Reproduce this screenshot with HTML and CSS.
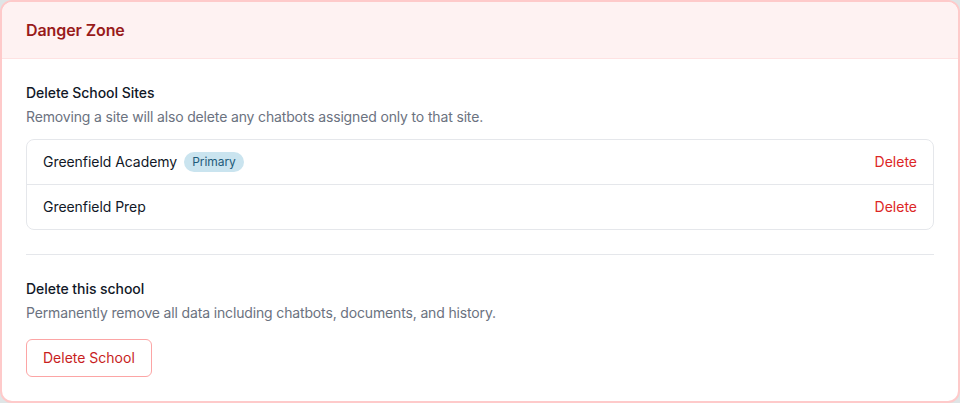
FILE: index.html
```html
<!DOCTYPE html>
<html lang="en">
<head>
  <meta charset="UTF-8">
  <meta name="viewport" content="width=device-width, initial-scale=1">
  <title>Danger Zone</title>
  <link rel="stylesheet" href="styles.css">
</head>
<body>
  <div class="card">
    <div class="card-header">
      <h2>Danger Zone</h2>
    </div>
    <div class="card-body">
      <div class="section">
        <h3>Delete School Sites</h3>
        <p>Removing a site will also delete any chatbots assigned only to that site.</p>
        <ul class="sites">
          <li>
            <span class="site-name">Greenfield Academy <span class="badge">Primary</span></span>
            <button class="link-btn">Delete</button>
          </li>
          <li>
            <span class="site-name">Greenfield Prep</span>
            <button class="link-btn">Delete</button>
          </li>
        </ul>
      </div>
      <div class="section bordered">
        <h3>Delete this school</h3>
        <p>Permanently remove all data including chatbots, documents, and history.</p>
        <button class="outline-btn">Delete School</button>
      </div>
    </div>
  </div>
</body>
</html>
```

FILE: styles.css
```css
* { box-sizing: border-box; margin:0; padding:0; }
body { font-family: Inter, "Noto Sans", sans-serif; background:#dfe5e6; }
.card { background:#fff; border:2px solid #fecaca; border-radius:12px; overflow:hidden; }
.card-header { background:#fef2f2; border-bottom:1px solid #fee2e2; height:57px; padding:0 24px; display:flex; align-items:center; }
.card-header h2 { font-size:16px; font-weight:600; color:#991b1b; line-height:24px; letter-spacing:-0.1px; }
.card-body { padding:24px; }
.section h3 { font-size:14px; font-weight:500; color:#111827; line-height:20px; letter-spacing:-0.05px; }
.section p { font-size:14px; color:#6b7280; line-height:20px; margin-top:4px; letter-spacing:-0.15px; }
.section.bordered { border-top:1px solid #e5e7eb; margin-top:24px; padding-top:24px; }
.sites { list-style:none; margin-top:12px; border:1px solid #e5e7eb; border-radius:8px; }
.sites li { display:flex; justify-content:space-between; align-items:center; padding:12px 16px; line-height:20px; font-size:14px; color:#111827; }
.sites li + li { border-top:1px solid #e5e7eb; }
.site-name { display:flex; align-items:center; gap:7px; letter-spacing:-0.05px; }
.badge { font-size:12px; line-height:16px; padding:2px 8px; border-radius:999px; background:#cae4ef; color:#1e5b7a; font-weight:400; }
.link-btn { background:none; border:none; font-family:inherit; font-size:14px; color:#dc2626; cursor:pointer; line-height:20px; }
.outline-btn { margin-top:16px; background:#fff; border:1px solid #fca5a5; border-radius:6px; padding:8px 16px; font-family:inherit; font-size:14px; line-height:20px; color:#c81e1e; font-weight:400; cursor:pointer; }
```
